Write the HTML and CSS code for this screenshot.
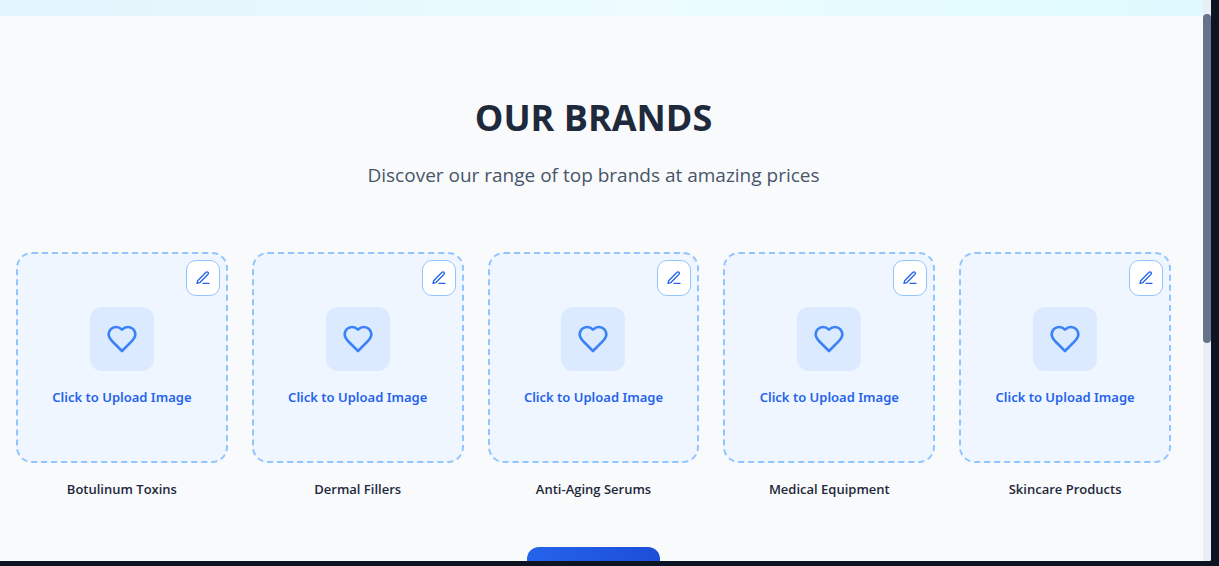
FILE: index.html
```
<!DOCTYPE html>
<html lang="en">
<head>
<meta charset="utf-8">
<title>Our Brands</title>
<link rel="stylesheet" href="styles.css">
</head>
<body>
<svg class="sprite" aria-hidden="true">
  <symbol id="heart" viewBox="0 0 24 24"><path d="M19 14c1.49-1.46 3-3.21 3-5.5A5.5 5.5 0 0 0 16.5 3c-1.76 0-3 .5-4.5 2-1.5-1.5-2.74-2-4.5-2A5.5 5.5 0 0 0 2 8.5c0 2.3 1.5 4.05 3 5.5l7 7Z"/></symbol>
  <symbol id="pen" viewBox="0 0 24 24"><path d="M12 20h9"/><path d="M16.5 3.5a2.12 2.12 0 0 1 3 3L7 19l-4 1 1-4Z"/></symbol>
</svg>
<div class="viewport">
  <main class="page">
    <div class="banner"></div>
    <section class="brands">
      <h1 class="title">OUR BRANDS</h1>
      <p class="subtitle">Discover our range of top brands at amazing prices</p>
      <div class="grid">
        <article class="brand">
          <div class="card">
            <button class="upload" type="button"><span class="tile"><svg class="heart"><use href="#heart"/></svg></span><span>Click to Upload Image</span></button>
            <button class="edit" type="button" aria-label="Edit"><svg class="pen"><use href="#pen"/></svg></button>
          </div>
          <h2 class="name">Botulinum Toxins</h2>
        </article>
        <article class="brand">
          <div class="card">
            <button class="upload" type="button"><span class="tile"><svg class="heart"><use href="#heart"/></svg></span><span>Click to Upload Image</span></button>
            <button class="edit" type="button" aria-label="Edit"><svg class="pen"><use href="#pen"/></svg></button>
          </div>
          <h2 class="name">Dermal Fillers</h2>
        </article>
        <article class="brand">
          <div class="card">
            <button class="upload" type="button"><span class="tile"><svg class="heart"><use href="#heart"/></svg></span><span>Click to Upload Image</span></button>
            <button class="edit" type="button" aria-label="Edit"><svg class="pen"><use href="#pen"/></svg></button>
          </div>
          <h2 class="name">Anti-Aging Serums</h2>
        </article>
        <article class="brand">
          <div class="card">
            <button class="upload" type="button"><span class="tile"><svg class="heart"><use href="#heart"/></svg></span><span>Click to Upload Image</span></button>
            <button class="edit" type="button" aria-label="Edit"><svg class="pen"><use href="#pen"/></svg></button>
          </div>
          <h2 class="name">Medical Equipment</h2>
        </article>
        <article class="brand">
          <div class="card">
            <button class="upload" type="button"><span class="tile"><svg class="heart"><use href="#heart"/></svg></span><span>Click to Upload Image</span></button>
            <button class="edit" type="button" aria-label="Edit"><svg class="pen"><use href="#pen"/></svg></button>
          </div>
          <h2 class="name">Skincare Products</h2>
        </article>
      </div>
      <button class="more" type="button" aria-label="More brands"></button>
    </section>
  </main>
  <div class="track"><div class="thumb"></div></div>
</div>
</body>
</html>
```
FILE: styles.css
```
* { box-sizing: border-box; }
body {
  margin: 0;
  height: 100vh;
  padding: 0 8px 5px 0;
  background: #0c1323;
  font-family: "Segoe UI", "Open Sans", "Noto Sans", sans-serif;
  color: #1e293b;
  overflow: hidden;
}
.sprite { display: none; }
.viewport {
  display: flex;
  height: 100%;
  overflow: hidden;
  background: #f9fafc;
  border-bottom-right-radius: 2px;
}
.page { flex: 1; min-width: 0; }
.banner {
  height: 16px;
  background: linear-gradient(90deg, #e2f4fc, #ecfcff 55%, #defafe);
}
.brands {
  display: flex;
  flex-direction: column;
  align-items: center;
  padding: 80px 32px 80px 16px;
}
.title {
  margin: 0 0 20px;
  font-size: 36px;
  line-height: 44px;
  font-weight: 700;
}
.subtitle {
  margin: 0 0 62px;
  font-size: 19px;
  line-height: 30px;
  color: #475569;
}
.grid {
  display: grid;
  grid-template-columns: repeat(5, minmax(0, 1fr));
  gap: 24px;
  width: 100%;
  margin-bottom: 48px;
}
.card { position: relative; aspect-ratio: 212 / 211; }
.upload {
  display: flex;
  flex-direction: column;
  align-items: center;
  justify-content: center;
  gap: 16px;
  width: 100%;
  height: 100%;
  padding: 0;
  border: 2px dashed #93c5fd;
  border-radius: 16px;
  background: #eff6ff;
  color: #2563eb;
  font: 600 13px/20px "Segoe UI", "Noto Sans", "Open Sans", sans-serif;
}
.tile {
  display: grid;
  place-items: center;
  width: 64px;
  height: 64px;
  border-radius: 12px;
  background: #dbeafe;
}
.heart, .pen {
  display: block;
  fill: none;
  stroke: currentColor;
  stroke-width: 2;
  stroke-linecap: round;
  stroke-linejoin: round;
}
.heart { width: 32px; height: 32px; color: #3b82f6; }
.pen { width: 16px; height: 16px; }
.edit {
  position: absolute;
  top: 8px;
  right: 8px;
  display: grid;
  place-items: center;
  width: 34px;
  height: 36px;
  padding: 0;
  border: 1px solid #93c5fd;
  border-radius: 10px;
  background: #fff;
  color: #2563eb;
}
.name {
  margin: 16px 0 0;
  font-size: 13px;
  line-height: 20px;
  font-weight: 600;
  text-align: center;
}
.more {
  width: 133px;
  height: 48px;
  border: 0;
  border-radius: 12px;
  background: linear-gradient(90deg, #2563eb, #1d4ed8);
}
.track { width: 8px; padding-top: 14px; background: #e9eef6; }
.thumb { height: 60.2%; border-radius: 4px; background: #64748b; }
```
